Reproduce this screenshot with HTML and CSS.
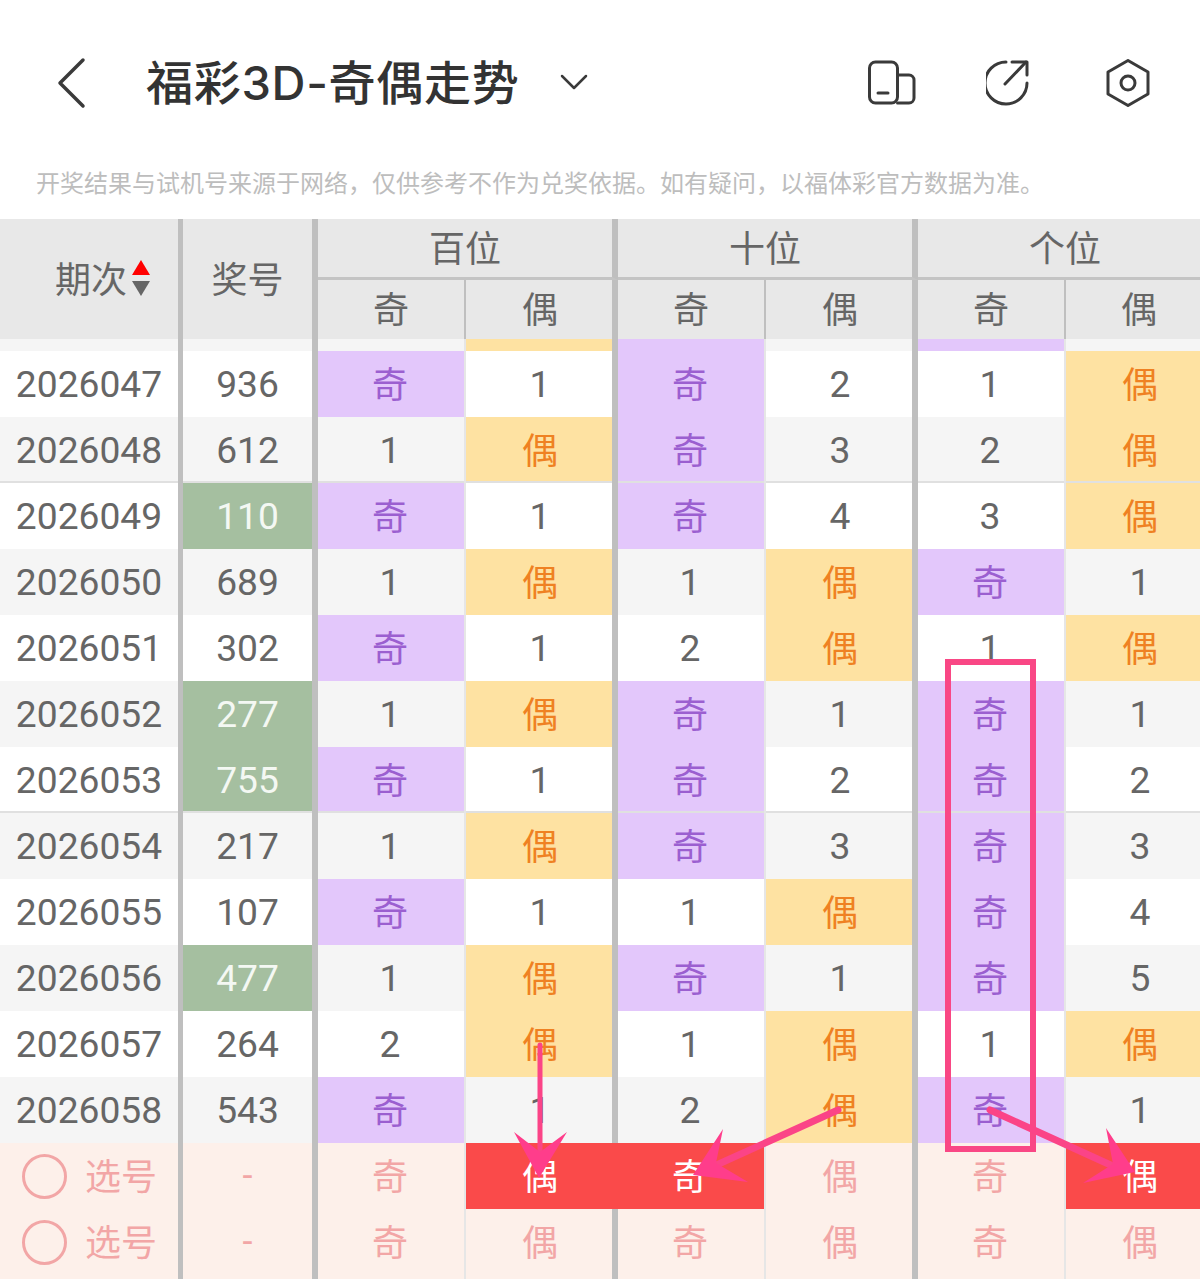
FILE: index.html
```html
<!DOCTYPE html>
<html lang="zh-CN">
  <head>
    <meta charset="UTF-8" />
    <title>福彩3D-奇偶走势</title>
    <link rel="stylesheet" href="styles.css">
  </head>
  <body>
    <div class="page">
      <div class="nav">
        <svg class="back-icon" width="30" height="52" viewBox="0 0 30 52">
          <path d="M26 3 L3 26 L26 49" />
        </svg>
        <div class="nav-title">福彩3D-奇偶走势</div>
        <svg class="chevron-icon" width="28" height="16" viewBox="0 0 28 16">
          <path d="M2 2 L14 14 L26 2" />
        </svg>
        <div class="nav-icons">
          <svg class="nav-icon" width="48" height="48" viewBox="0 0 48 48">
            <rect x="1.5" y="3" width="28" height="41" rx="6" />
            <path d="M29.5 16 H41 a5 5 0 0 1 5 5 V39 a5 5 0 0 1 -5 5 H29.5" />
            <path d="M10 34 H20" />
          </svg>
          <svg class="nav-icon" width="48" height="48" viewBox="0 0 48 48">
            <path d="M20 3 A21 21 0 1 0 41 24" />
            <path d="M19 25 L40 3" />
            <path d="M26 3 H41 V16" />
          </svg>
          <svg class="nav-icon" width="48" height="48" viewBox="0 0 48 48">
            <path d="M24 1.5 L44 13 V35 L24 46.5 L4 35 V13 Z" />
            <circle cx="24" cy="24" r="7" />
          </svg>
        </div>
      </div>
      <div class="notice">开奖结果与试机号来源于网络，仅供参考不作为兑奖依据。如有疑问，以福体彩官方数据为准。</div>

      <div class="table-head">
        <div class="head-period">
          <span>期次</span>
          <span class="sort"><i class="sort-up"></i><i class="sort-down"></i></span>
        </div>
        <div class="head-number">奖号</div>
        <div class="head-group">百位</div>
        <div class="head-group">十位</div>
        <div class="head-group head-last">个位</div>
        <div class="head-sub">奇</div>
        <div class="head-sub">偶</div>
        <div class="head-sub">奇</div>
        <div class="head-sub">偶</div>
        <div class="head-sub">奇</div>
        <div class="head-sub head-last">偶</div>
      </div>

      <div class="row alt sliver">
        <div></div><div></div><div></div><div class="even"></div><div class="odd"></div><div></div><div class="odd"></div><div></div>
      </div>
      <div class="row">
        <div>2026047</div><div>936</div><div class="odd">奇</div><div>1</div><div class="odd">奇</div><div>2</div><div>1</div><div class="even">偶</div>
      </div>
      <div class="row alt ruled">
        <div>2026048</div><div>612</div><div>1</div><div class="even">偶</div><div class="odd">奇</div><div>3</div><div>2</div><div class="even">偶</div>
      </div>
      <div class="row">
        <div>2026049</div><div class="hot">110</div><div class="odd">奇</div><div>1</div><div class="odd">奇</div><div>4</div><div>3</div><div class="even">偶</div>
      </div>
      <div class="row alt">
        <div>2026050</div><div>689</div><div>1</div><div class="even">偶</div><div>1</div><div class="even">偶</div><div class="odd">奇</div><div>1</div>
      </div>
      <div class="row">
        <div>2026051</div><div>302</div><div class="odd">奇</div><div>1</div><div>2</div><div class="even">偶</div><div>1</div><div class="even">偶</div>
      </div>
      <div class="row alt">
        <div>2026052</div><div class="hot">277</div><div>1</div><div class="even">偶</div><div class="odd">奇</div><div>1</div><div class="odd">奇</div><div>1</div>
      </div>
      <div class="row ruled">
        <div>2026053</div><div class="hot">755</div><div class="odd">奇</div><div>1</div><div class="odd">奇</div><div>2</div><div class="odd">奇</div><div>2</div>
      </div>
      <div class="row alt">
        <div>2026054</div><div>217</div><div>1</div><div class="even">偶</div><div class="odd">奇</div><div>3</div><div class="odd">奇</div><div>3</div>
      </div>
      <div class="row">
        <div>2026055</div><div>107</div><div class="odd">奇</div><div>1</div><div>1</div><div class="even">偶</div><div class="odd">奇</div><div>4</div>
      </div>
      <div class="row alt">
        <div>2026056</div><div class="hot">477</div><div>1</div><div class="even">偶</div><div class="odd">奇</div><div>1</div><div class="odd">奇</div><div>5</div>
      </div>
      <div class="row">
        <div>2026057</div><div>264</div><div>2</div><div class="even">偶</div><div>1</div><div class="even">偶</div><div>1</div><div class="even">偶</div>
      </div>
      <div class="row alt">
        <div>2026058</div><div>543</div><div class="odd">奇</div><div>1</div><div>2</div><div class="even">偶</div><div class="odd">奇</div><div>1</div>
      </div>
      <div class="row pick">
        <div class="pick-cell"><i class="pick-circle"></i>选号</div><div>-</div><div>奇</div><div class="chosen chosen-join">偶</div><div class="chosen">奇</div><div>偶</div><div>奇</div><div class="chosen">偶</div>
      </div>
      <div class="row pick">
        <div class="pick-cell"><i class="pick-circle"></i>选号</div><div>-</div><div>奇</div><div>偶</div><div>奇</div><div>偶</div><div>奇</div><div>偶</div>
      </div>
      <div class="row pick sliver">
        <div></div><div></div><div></div><div></div><div></div><div></div><div></div><div></div>
      </div>

      <svg class="marks" width="1200" height="1279" viewBox="0 0 1200 1279">
        <rect class="mark-box" x="948" y="662" width="85" height="487" />
        <path class="mark-line" d="M540 1045 V1160" />
        <path class="mark-head" d="M539 1178 L514 1132 L540 1152 L567 1132 Z" />
        <path class="mark-line mark-line-wide" d="M838 1110 L712 1167" />
        <path class="mark-head" d="M693 1175 L723 1129 L716 1163 L748 1182 Z" />
        <path class="mark-line mark-line-wide" d="M990 1110 L1115 1167" />
        <path class="mark-head" d="M1135 1172 L1106 1128 L1113 1164 L1083 1183 Z" />
      </svg>
    </div>
  </body>
</html>
```

FILE: styles.css
```css
* {
  margin: 0;
  padding: 0;
  box-sizing: border-box;
}

body {
  font-family: Roboto, "Noto Sans CJK SC", sans-serif;
  background: #fff;
  overflow: hidden;
}

.page {
  position: relative;
  width: 1200px;
  height: 1279px;
  overflow: hidden;
}

/* top bar */
.nav {
  display: flex;
  align-items: center;
  height: 166px;
  padding: 0 48px 0 57px;
}

.back-icon,
.chevron-icon {
  fill: none;
  stroke: #3a3a3a;
  stroke-linecap: round;
  stroke-linejoin: round;
}

.back-icon {
  stroke-width: 3.5;
}

.chevron-icon {
  stroke-width: 2.5;
  margin-left: 41px;
  margin-bottom: 2px;
}

.nav-title {
  margin-left: 59px;
  padding-bottom: 8px;
  font-family: Inter, "Noto Sans CJK SC", sans-serif;
  font-size: 47px;
  font-weight: 500;
  letter-spacing: 0.7px;
  color: #333;
  white-space: nowrap;
}

.nav-icons {
  display: flex;
  gap: 70px;
  margin-left: auto;
}

.nav-icon {
  fill: none;
  stroke: #3a3a3a;
  stroke-width: 3;
  stroke-linecap: round;
  stroke-linejoin: round;
}

.notice {
  height: 53px;
  padding-left: 36px;
  font-family: "Noto Sans CJK SC", sans-serif;
  font-size: 24px;
  line-height: 32px;
  color: #bdbdbd;
  white-space: nowrap;
}

/* table header */
.table-head {
  display: grid;
  grid-template-columns: 183px 135px 148px 152px 148px 152px 148px 134px;
  grid-template-rows: 61px 59px;
  background: #e8e8e8;
  font-size: 36px;
  color: #666;
}

.table-head > div {
  display: flex;
  align-items: center;
  justify-content: center;
  padding-bottom: 5px;
}

.head-period,
.head-number {
  grid-row: 1 / 3;
}

.table-head > .head-period {
  justify-content: flex-start;
  padding-left: 55px;
  border-right: 5px solid #bfbfbf;
}

.head-number {
  border-right: 6px solid #bfbfbf;
}

.head-group {
  grid-column: span 2;
  border-right: 6px solid #bfbfbf;
  border-bottom: 3px solid #c4c4c4;
}

.head-sub:nth-child(even) {
  border-right: 2px solid #bfbfbf;
}

.head-sub:nth-child(odd) {
  border-right: 6px solid #bfbfbf;
  padding-left: 2px;
}

.table-head > .head-last {
  border-right: 0;
  padding-left: 12px;
}

.sort {
  display: flex;
  flex-direction: column;
  gap: 6px;
  margin-top: 2px;
  margin-left: 5px;
}

.sort i {
  display: block;
  width: 0;
  height: 0;
  border-left: 9px solid transparent;
  border-right: 9px solid transparent;
}

.sort-up {
  border-bottom: 15px solid #f00;
}

.sort-down {
  border-top: 15px solid #666;
}

/* table body */
.row {
  display: grid;
  grid-template-columns: 183px 135px 148px 152px 148px 152px 148px 134px;
  height: 66px;
  background: #fff;
  font-size: 37.2px;
  color: #666;
}

.row.alt {
  background: #f5f5f5;
}

.row.sliver {
  height: 12px;
}

.row.pick.sliver {
  height: 4px;
}

.row.ruled > div {
  box-shadow: inset 0 -2px 0 #e0e0e0;
}

.row > div {
  display: flex;
  align-items: center;
  justify-content: center;
  border-right: 2px solid #e6e6e6;
}

.row > div:nth-child(1) {
  border-right: 5px solid #bfbfbf;
}

.row > div:nth-child(2),
.row > div:nth-child(4),
.row > div:nth-child(6) {
  border-right: 6px solid #bfbfbf;
}

.row > div:nth-child(3),
.row > div:nth-child(5),
.row > div:nth-child(7) {
  padding-right: 2px;
}

.row > div:nth-child(4),
.row > div:nth-child(6) {
  padding-left: 2px;
}

.row > div:nth-child(8) {
  border-right: 0;
  padding-left: 14px;
}

.row > .odd,
.row > .even {
  font-size: 36px;
  padding-bottom: 5px;
}

.row > .odd {
  background: #e3c7fb;
  background-clip: padding-box;
  color: #9b5fd0;
}

.row > .even {
  background: #fee2a2;
  background-clip: padding-box;
  color: #ef8122;
}

.row > .hot {
  background: #a5bfa0;
  background-clip: padding-box;
  color: #f4f8f3;
}

/* pick rows */
.row.pick {
  background: #fdf0ea;
  font-size: 36px;
  color: #f2a6a6;
}

.row.pick > div {
  padding-bottom: 5px;
}

.row.pick > div:nth-child(2) {
  padding-bottom: 0;
}

.row > .pick-cell {
  justify-content: flex-start;
  padding-left: 22px;
}

.pick-circle {
  width: 45px;
  height: 45px;
  margin-top: 5px;
  margin-right: 18px;
  border: 3px solid #f2a6a6;
  border-radius: 50%;
}

.row > .chosen {
  background: #fa4a4a;
  color: #fff;
  border-right-color: #e6e6e6;
  background-clip: padding-box;
}

.row > div.chosen-join {
  background-clip: border-box;
  border-right-color: #fa4a4a;
}

/* hand drawn marks */
.marks {
  position: absolute;
  top: 0;
  left: 0;
  pointer-events: none;
}

.mark-box {
  fill: none;
  stroke: #f94785;
  stroke-width: 6;
}

.mark-line {
  fill: none;
  stroke: #fb4487;
  stroke-width: 5;
  stroke-linecap: round;
}

.mark-line-wide {
  stroke-width: 7;
}

.mark-head {
  fill: #ff3d8b;
}
```
